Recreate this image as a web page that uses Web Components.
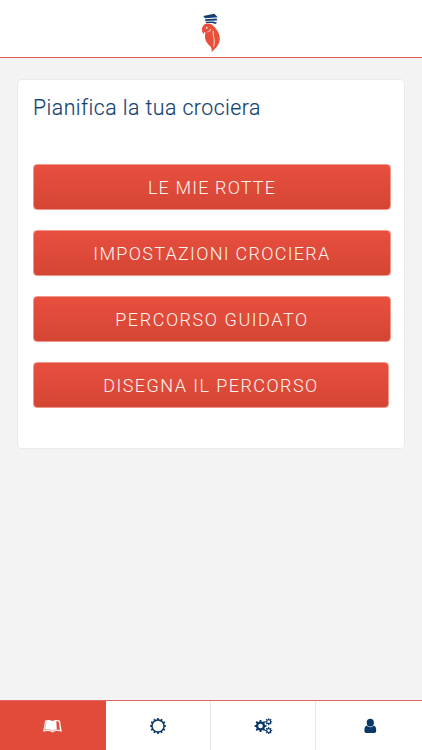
<!DOCTYPE html>
<html lang="it">
<head>
<meta charset="utf-8">
<title>Pianifica la tua crociera</title>
<style>
html,body{margin:0;height:100%;overflow:hidden;background:#f3f3f3}
</style>
</head>
<body>
<cruise-app></cruise-app>
<script>
const define = (name, html, setup) => customElements.define(name, class extends HTMLElement {
  connectedCallback() {
    if (this.shadowRoot) return;
    this.attachShadow({mode: 'open'}).innerHTML = html;
    if (setup) setup(this, this.shadowRoot);
  }
});

// Tracks a label out so that its glyphs span the given width
const track = (label, text, width) => {
  const spacing = (width - label.getBoundingClientRect().width) / (text.trim().length - 1);
  label.style.letterSpacing = spacing.toFixed(3) + 'px';
};

// Toothed ring: n square teeth around a circle with a round hole
const gear = (cx, cy, n, ro, ri, hole) => {
  const p = [], step = Math.PI * 2 / n;
  for (let i = 0; i < n; i++) {
    const a = i * step;
    for (const [k, r] of [[-.28, ri], [-.18, ro], [.18, ro], [.28, ri]]) {
      p.push((cx + r * Math.cos(a + k * step)).toFixed(2) + ' ' + (cy + r * Math.sin(a + k * step)).toFixed(2));
    }
  }
  return `<path fill-rule="evenodd" d="M${p.join('L')}ZM${cx - hole} ${cy}a${hole} ${hole} 0 1 0 ${hole * 2} 0a${hole} ${hole} 0 1 0 ${-hole * 2} 0Z"/>`;
};

const icons = {
  book: `<path d="M2 2.800C4.300 1.600 7 1.700 9.500 3C12 1.700 14.700 1.600 17 2.800L18.800 13.700C15.500 12.600 12 12.800 9.500 14.400C7 12.800 3.500 12.600 .2 13.700Z"/><path d="M13.300 3.300C14.200 3.200 15 3.300 15.700 3.600L17 11.900C15.900 11.600 14.900 11.500 13.800 11.600Z" fill="#e24b3a"/><path d="M3 3.900L1.700 12.100C4.600 11.300 7.400 11.700 9.500 12.800C11.600 11.700 14.500 11.300 17.300 12.100" fill="none" stroke="#e24b3a" stroke-width=".5"/>`,
  sun: gear(9, 8, 12, 8, 6.700, 5.300),
  gears: gear(6.500, 8, 8, 6.1, 4.6, 2.3) + gear(14.700, 3.700, 8, 3.600, 2.600, 1.4) + gear(14.700, 12.600, 8, 3.600, 2.600, 1.4),
  user: `<ellipse cx="10.300" cy="4.700" rx="3.600" ry="3.900"/><path d="M6.700 7.400C4.900 7.900 4.400 10 4.400 12.400C4.400 14.300 5.400 15 6.800 15H13.800C15.200 15 16.200 14.300 16.200 12.400C16.200 10 15.700 7.900 13.900 7.400C12 9.700 8.600 9.700 6.700 7.400Z"/>`
};

define('app-logo', `<style>:host{display:block;width:22px;height:42px}svg{display:block}</style>
<svg width="22" height="42" viewBox="0 0 22 42">
<path fill="#ea4f3a" d="M5.200 11.900C8.200 10.900 11.800 11.800 13.500 14C17.300 18 20.200 22.300 19.800 27.800C19.200 32.600 15.700 36.700 11.600 40C12 38 11.700 36.200 10.300 34.200C7 31.500 4.700 28 5 24C5.100 22.500 5.200 21.200 5.500 20.400C4.500 19.900 4 20.100 3.700 21.900C1.800 19.900 1.400 17.500 2.300 15.400C2.900 13.700 3.800 12.600 5.200 11.900Z"/>
<path fill="none" stroke="#fff" stroke-width=".8" d="M7.300 19.900C9.400 19.700 10.400 18.500 10.800 17M13.200 19C12.500 24 15.700 28 13.500 34.500"/>
<circle cx="6.700" cy="15.800" r=".9" fill="#fff"/>
<path fill="#153e70" d="M3.200 4L14.300 1.800L17.800 5.300L5 6.300ZM5.100 7.300L16.800 6.500L17 8.500L5.300 9ZM5.500 9.800L13.400 9.500L17.200 10.700L15.200 12L12.600 10.900L6 11Z"/>
</svg>`);

define('app-header', `<style>:host{display:flex;flex:none;height:58px;box-sizing:border-box;justify-content:center;padding-top:12px;background:#fff;border-bottom:1px solid #e2574c}</style><slot></slot>`);

define('plan-card', `<style>
:host{display:block;flex:none;box-sizing:border-box;width:388px;height:370px;margin:21px 17px 0;padding:15px 13px 0 15px;background:#fff;border:1px solid #ebebeb;border-radius:4px}
h1{margin:0;height:26px;font:300 21.300px/26px Roboto,sans-serif;color:#153f70;white-space:nowrap;-webkit-text-stroke:.15px #153f70}
.actions{display:flex;flex-direction:column;gap:20px;margin-top:42.600px}
</style><h1><span><slot name="title"></slot></span></h1><div class="actions"><slot></slot></div>`, (el, root) => {
  track(root.querySelector('span'), el.querySelector('[slot=title]').textContent, 227);
});

define('plan-button', `<style>
:host{display:block;box-sizing:border-box;width:358px;height:46.200px}
:host([narrow]){width:356px}
button{display:block;box-sizing:border-box;width:100%;height:100%;margin:0;padding:1px 0 0;border:1px solid #f0968a;border-radius:4px;background:linear-gradient(#e84f3f,#d54534);color:#fff3ef;font:300 18px/44px Roboto,sans-serif;text-align:center;white-space:nowrap}
</style><button><span><slot></slot></span></button>`, (el, root) => {
  track(root.querySelector('span'), el.textContent, +el.getAttribute('text-width'));
});

define('tab-item', `<style>
:host{display:flex;box-sizing:border-box;justify-content:center;padding-top:17px;border-right:1px solid #e6e6e6;color:#0c3869}
:host(:last-child){border-right:0;padding-left:1px}
:host([active]){background:#e24b3a;color:#fff;border-right-color:#e24b3a}
svg{display:block;fill:currentColor}
</style><svg width="19" height="16" viewBox="0 0 19 16"></svg>`, (el, root) => {
  root.querySelector('svg').innerHTML = icons[el.getAttribute('icon')];
});

define('tab-bar', `<style>:host{display:grid;flex:none;box-sizing:border-box;grid-template-columns:106px 105px 105px 106px;height:50px;margin-top:auto;background:#fff;border-top:1px solid #df665e}</style><slot></slot>`);

define('cruise-app', `<style>:host{display:flex;flex-direction:column;width:422px;height:750px;background:#f3f3f3}</style>
<app-header><app-logo></app-logo></app-header>
<plan-card><span slot="title">Pianifica la tua crociera</span>
<plan-button text-width="127">LE MIE ROTTE</plan-button>
<plan-button text-width="236">IMPOSTAZIONI CROCIERA</plan-button>
<plan-button text-width="192">PERCORSO GUIDATO</plan-button>
<plan-button narrow text-width="214">DISEGNA IL PERCORSO</plan-button>
</plan-card>
<tab-bar><tab-item active icon="book"></tab-item><tab-item icon="sun"></tab-item><tab-item icon="gears"></tab-item><tab-item icon="user"></tab-item></tab-bar>`);
</script>
</body>
</html>
